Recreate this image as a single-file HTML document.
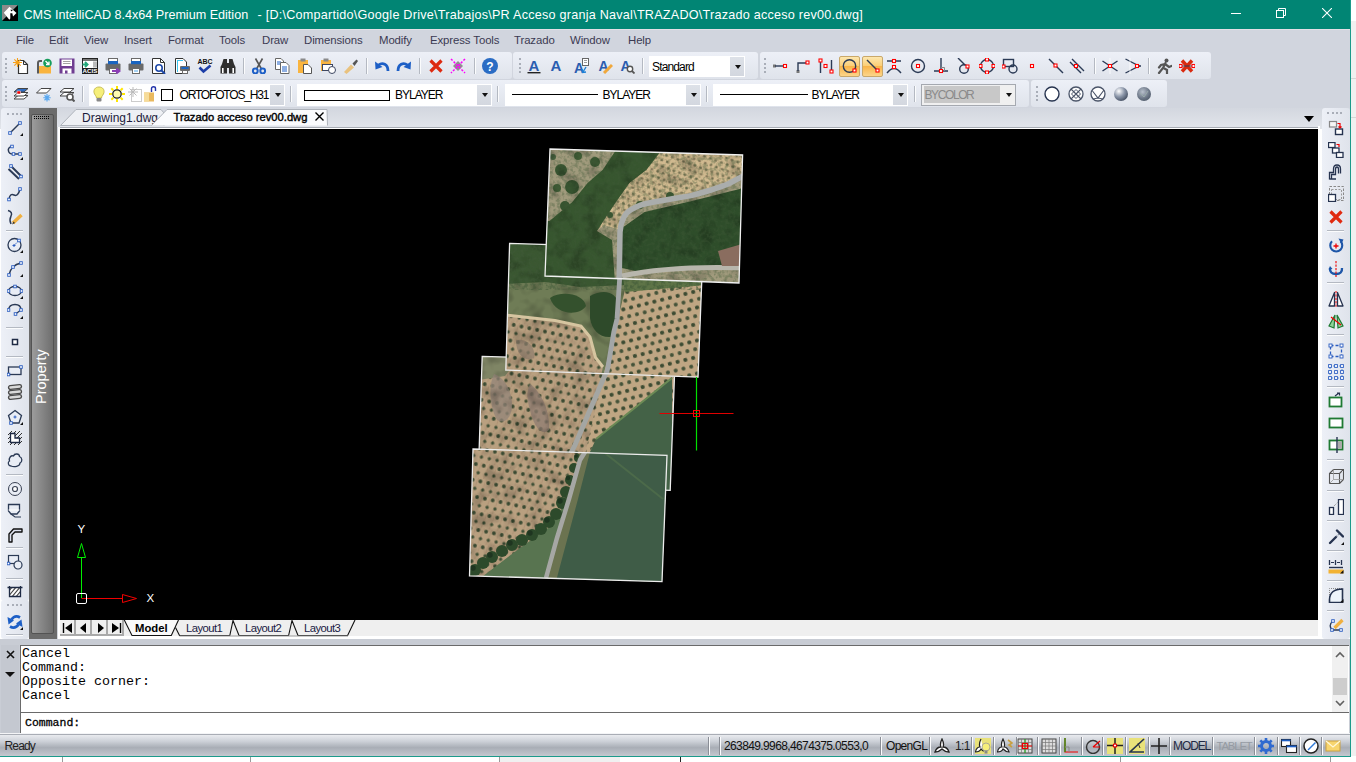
<!DOCTYPE html><html><head><meta charset="utf-8"><style>
*{margin:0;padding:0;box-sizing:border-box}
html,body{width:1356px;height:762px;overflow:hidden;background:#fff;font-family:"Liberation Sans",sans-serif;position:relative}
.a{position:absolute}
.t{white-space:nowrap;line-height:1}
.seg{position:absolute;background:linear-gradient(#edf0f7,#dfe3eb);border-radius:3px}
.grip{position:absolute;width:2px;border-left:2px dotted #a9aeb8}
.sep{position:absolute;width:2px;border-left:1px solid #b4b9c2;border-right:1px solid #fbfcfd}
.hsep{position:absolute;height:2px;border-top:1px solid #b4b9c2;border-bottom:1px solid #fbfcfd}
.dd{position:absolute;background:#fff}
.ddb{position:absolute;background:linear-gradient(#dde1e8,#d3d7df);}
.ddb:after{content:"";position:absolute;left:5px;top:7.5px;border-left:3.5px solid transparent;border-right:3.5px solid transparent;border-top:4px solid #111}
</style></head><body>
<div class="a" style="left:1351px;top:0px;width:5px;height:762px;background:#f0f0f0"></div>
<div class="a" style="left:1351px;top:0px;width:5px;height:21px;background:#fff"></div>
<div class="a" style="left:1351px;top:78px;width:5px;height:1px;background:#d6d6d6"></div>
<div class="a" style="left:1351px;top:117px;width:5px;height:1px;background:#d6d6d6"></div>
<div class="a" style="left:0px;top:756px;width:1356px;height:6px;background:#fff"></div>
<div class="a" style="left:62px;top:757px;width:1px;height:5px;background:#9a9a9a"></div>
<div class="a" style="left:250px;top:757px;width:1px;height:5px;background:#9a9a9a"></div>
<div class="a" style="left:499px;top:757px;width:1px;height:5px;background:#9a9a9a"></div>
<div class="a" style="left:548px;top:757px;width:1px;height:5px;background:#9a9a9a"></div>
<div class="a" style="left:1120px;top:757px;width:1px;height:5px;background:#9a9a9a"></div>
<div class="a" style="left:1330px;top:757px;width:1px;height:5px;background:#9a9a9a"></div>
<div class="a" style="left:500px;top:757px;width:120px;height:5px;background:#f0f0f0"></div>
<div class="a" style="left:680px;top:757px;width:1px;height:5px;background:#222"></div>
<div class="a" style="left:0px;top:0px;width:1351px;height:29px;background:#018574"></div>
<svg class="a" style="left:2.0px;top:5.0px;" width="16" height="16" viewBox="0 0 16 16"><path d="M0 0 H16 L0 16 Z" fill="#8a8a8a"/><path d="M16 0 V16 H0 Z" fill="#000"/><path d="M1.8 7.8 L7.5 1.8 L14.5 8 L11 11.5 L10.3 8.3 L8.3 8.3 L8.3 13.5 L7.3 14.8 Z" fill="#fff"/><path d="M8.3 4.8 H11 L9.65 6.4 Z" fill="#000"/></svg>
<div class="a t" style="left:23.5px;top:8.5px;font-size:12.6px;color:#fff">CMS IntelliCAD 8.4x64 Premium Edition</div>
<div class="a t" style="left:257.5px;top:8.5px;font-size:12.6px;color:#fff;letter-spacing:0.245px">- [D:\Compartido\Google Drive\Trabajos\PR Acceso granja Naval\TRAZADO\Trazado acceso rev00.dwg]</div>
<div class="a" style="left:1231px;top:13px;width:10px;height:1px;background:#fff"></div>
<svg class="a" style="left:1276.0px;top:8.0px;" width="10" height="10" viewBox="0 0 10 10"><rect x="0.5" y="2.5" width="7" height="7" fill="none" stroke="#fff"/><path d="M2.5 2.5 V0.5 H9.5 V7.5 H7.5" fill="none" stroke="#fff"/></svg>
<svg class="a" style="left:1322.0px;top:8.0px;" width="10" height="10" viewBox="0 0 10 10"><path d="M0 0 L10 10 M10 0 L0 10" stroke="#fff" stroke-width="1.1"/></svg>
<div class="a" style="left:0px;top:29px;width:1351px;height:79px;background:#d1d5de"></div>
<div class="a" style="left:0px;top:29px;width:1351px;height:1px;background:#e3dfe6"></div>
<div class="a t" style="left:16px;top:35px;font-size:11.4px;color:#3b3a52;letter-spacing:-0.1px">File</div>
<div class="a t" style="left:49px;top:35px;font-size:11.4px;color:#3b3a52;letter-spacing:-0.1px">Edit</div>
<div class="a t" style="left:84px;top:35px;font-size:11.4px;color:#3b3a52;letter-spacing:-0.1px">View</div>
<div class="a t" style="left:124px;top:35px;font-size:11.4px;color:#3b3a52;letter-spacing:-0.1px">Insert</div>
<div class="a t" style="left:168px;top:35px;font-size:11.4px;color:#3b3a52;letter-spacing:-0.1px">Format</div>
<div class="a t" style="left:219px;top:35px;font-size:11.4px;color:#3b3a52;letter-spacing:-0.1px">Tools</div>
<div class="a t" style="left:262px;top:35px;font-size:11.4px;color:#3b3a52;letter-spacing:-0.1px">Draw</div>
<div class="a t" style="left:304px;top:35px;font-size:11.4px;color:#3b3a52;letter-spacing:-0.1px">Dimensions</div>
<div class="a t" style="left:379px;top:35px;font-size:11.4px;color:#3b3a52;letter-spacing:-0.1px">Modify</div>
<div class="a t" style="left:430px;top:35px;font-size:11.4px;color:#3b3a52;letter-spacing:-0.1px">Express Tools</div>
<div class="a t" style="left:514px;top:35px;font-size:11.4px;color:#3b3a52;letter-spacing:-0.1px">Trazado</div>
<div class="a t" style="left:570px;top:35px;font-size:11.4px;color:#3b3a52;letter-spacing:-0.1px">Window</div>
<div class="a t" style="left:628px;top:35px;font-size:11.4px;color:#3b3a52;letter-spacing:-0.1px">Help</div>
<div class="seg" style="left:2px;top:52px;width:510px;height:27px"></div>
<div class="seg" style="left:513px;top:52px;width:245px;height:27px"></div>
<div class="seg" style="left:760px;top:52px;width:451px;height:27px"></div>
<div class="seg" style="left:2px;top:80px;width:1027px;height:27px"></div>
<div class="seg" style="left:1031px;top:80px;width:136px;height:27px"></div>
<div class="grip" style="left:5px;top:58px;height:15px"></div>
<div class="grip" style="left:519px;top:58px;height:15px"></div>
<div class="grip" style="left:764px;top:58px;height:15px"></div>
<div class="grip" style="left:5px;top:86px;height:15px"></div>
<div class="grip" style="left:1036px;top:86px;height:15px"></div>
<div class="sep" style="left:243px;top:58px;height:16px"></div>
<div class="sep" style="left:366px;top:58px;height:16px"></div>
<div class="sep" style="left:419px;top:58px;height:16px"></div>
<div class="sep" style="left:474px;top:58px;height:16px"></div>
<div class="sep" style="left:642px;top:58px;height:16px"></div>
<div class="sep" style="left:1094px;top:58px;height:16px"></div>
<div class="sep" style="left:1148px;top:58px;height:16px"></div>
<div class="sep" style="left:82px;top:86px;height:16px"></div>
<div class="sep" style="left:290px;top:86px;height:16px"></div>
<div class="sep" style="left:497px;top:86px;height:16px"></div>
<div class="sep" style="left:706px;top:86px;height:16px"></div>
<div class="sep" style="left:914px;top:86px;height:16px"></div>
<div class="dd" style="left:649px;top:56px;width:96px;height:21px"></div>
<div class="ddb" style="left:730px;top:57px;width:14px;height:19px"></div>
<div class="a t" style="left:652px;top:60.5px;font-size:12px;color:#000;letter-spacing:-0.85px">Standard</div>
<div class="dd" style="left:89px;top:84px;width:196px;height:22px"></div>
<div class="ddb" style="left:270px;top:85px;width:14px;height:20px"></div>
<div class="dd" style="left:297px;top:84px;width:195px;height:22px"></div>
<div class="ddb" style="left:477px;top:85px;width:14px;height:20px"></div>
<div class="dd" style="left:505px;top:84px;width:196px;height:22px"></div>
<div class="ddb" style="left:686px;top:85px;width:14px;height:20px"></div>
<div class="dd" style="left:713px;top:84px;width:195px;height:22px"></div>
<div class="ddb" style="left:893px;top:85px;width:14px;height:20px"></div>
<div class="a t" style="left:179.5px;top:89px;font-size:12px;color:#000;letter-spacing:-1.18px">ORTOFOTOS_H31</div>
<div class="a" style="left:161px;top:88.5px;width:12px;height:12px;border:1px solid #000;background:#fff"></div>
<div class="a" style="left:304px;top:89.5px;width:86px;height:11px;border:1px solid #000;background:#fff"></div>
<div class="a t" style="left:395px;top:89px;font-size:12px;color:#000;letter-spacing:-1px">BYLAYER</div>
<div class="a" style="left:512px;top:94px;width:86px;height:1px;background:#000"></div>
<div class="a t" style="left:602.5px;top:89px;font-size:12px;color:#000;letter-spacing:-1px">BYLAYER</div>
<div class="a" style="left:720px;top:94px;width:88px;height:1px;background:#000"></div>
<div class="a t" style="left:811.5px;top:89px;font-size:12px;color:#000;letter-spacing:-1px">BYLAYER</div>
<div class="a" style="left:921px;top:84px;width:95px;height:22px;border:1px solid #a5a9b0;background:#f0f0f0"></div>
<div class="a" style="left:923.5px;top:86px;width:76.5px;height:17px;background:#c8c8c8"></div>
<div class="a t" style="left:924.5px;top:89px;font-size:12px;color:#8a8a8a;letter-spacing:-1.4px">BYCOLOR</div>
<div class="ddb" style="left:1001px;top:85px;width:14px;height:20px;background:#f0f0f0"></div>
<svg class="a" style="left:13.0px;top:58.0px;" width="16" height="16" viewBox="0 0 16 16"><path d="M5.5 2.5 H10.5 L14.5 6.5 V15.5 H5.5 Z" fill="#fff" stroke="#333" stroke-width="1.2"/><path d="M10.5 2.5 V6.5 H14.5" fill="none" stroke="#333"/><g stroke="#f7a21b" stroke-width="1.1"><path d="M4.5 0 V9 M0 4.5 H9 M1.3 1.3 L7.7 7.7 M7.7 1.3 L1.3 7.7"/></g><circle cx="4.5" cy="4.5" r="2" fill="#f7a21b"/></svg>
<svg class="a" style="left:36.0px;top:58.0px;" width="16" height="16" viewBox="0 0 16 16"><path d="M2 15.5 V5 Q2 3 4 3 H6" stroke="#5a5a5a" stroke-width="2" fill="none"/><path d="M3 8 H15 V15.5 H3 Z" fill="#f9b43f"/><circle cx="11.5" cy="5" r="4.3" fill="#169d5c"/><path d="M9.5 3 L12.8 6.3 M13 3.5 V6.5 H10" stroke="#fff" stroke-width="1.3" fill="none"/></svg>
<svg class="a" style="left:59.0px;top:58.0px;" width="16" height="16" viewBox="0 0 16 16"><rect x="0.5" y="0.5" width="15" height="15" fill="#6f3d91"/><rect x="2.5" y="1.5" width="10.5" height="6.5" fill="#fff"/><path d="M4 3.5 H11.5 M4 5.5 H11.5" stroke="#999" stroke-width="0.9"/><rect x="3.5" y="10.5" width="9" height="5" fill="#fff"/><rect x="6" y="12.5" width="2.5" height="3" fill="#6f3d91"/></svg>
<svg class="a" style="left:82.0px;top:58.0px;" width="16" height="16" viewBox="0 0 16 16"><rect x="0.5" y="0.5" width="15" height="15" fill="#fff" stroke="#222"/><rect x="1" y="1" width="14" height="2" fill="#777"/><rect x="11" y="3.5" width="4" height="6" fill="#bbb"/><rect x="1" y="10" width="14" height="6" fill="#1e1e1e"/><text x="8" y="15.3" font-size="6.2" font-weight="bold" fill="#fff" text-anchor="middle" font-family="Liberation Sans">ACIS</text><path d="M0.5 6.5 H5 M3 4 L5.5 6.5 L3 9" stroke="#22a77a" stroke-width="2" fill="none"/></svg>
<svg class="a" style="left:105.0px;top:58.0px;" width="16" height="16" viewBox="0 0 16 16"><rect x="0.5" y="5.5" width="15" height="7" rx="1" fill="#6a6a6a"/><rect x="3.5" y="0.5" width="9" height="4" fill="#fff" stroke="#6a6a6a"/><rect x="3" y="3" width="10" height="3.2" fill="#1a64c0"/><rect x="4.5" y="10.5" width="7" height="5" fill="#fff" stroke="#6a6a6a"/><path d="M7 13 H14 M11.3 10.5 L14.5 13 L11.3 15.5" stroke="#8b3fb5" stroke-width="2" fill="none"/></svg>
<svg class="a" style="left:128.0px;top:58.0px;" width="16" height="16" viewBox="0 0 16 16"><rect x="0.5" y="5.5" width="15" height="7" rx="1" fill="#6a6a6a"/><rect x="3.5" y="0.5" width="9" height="4" fill="#fff" stroke="#6a6a6a"/><rect x="3" y="3" width="10" height="3.2" fill="#1a64c0"/><rect x="4.5" y="10.5" width="7" height="5" fill="#fff" stroke="#6a6a6a"/><path d="M6 13 H10" stroke="#4aa3e8"/></svg>
<svg class="a" style="left:151.0px;top:58.0px;" width="16" height="16" viewBox="0 0 16 16"><path d="M1.5 0.5 H9.5 L13.5 4.5 V15.5 H1.5 Z" fill="#fff" stroke="#333"/><path d="M9.5 0.5 V4.5 H13.5" fill="none" stroke="#333"/><circle cx="8" cy="10" r="3.2" fill="none" stroke="#1d48a8" stroke-width="1.6"/><path d="M10.3 12.3 L14 16" stroke="#1d48a8" stroke-width="2"/></svg>
<svg class="a" style="left:174.0px;top:58.0px;" width="16" height="16" viewBox="0 0 16 16"><path d="M1.5 0.5 H9 L12.5 4 V15.5 H1.5 Z" fill="#fff" stroke="#333"/><path d="M3.5 2 V14 M3.5 2.5 H9" stroke="#3cc6f0"/><rect x="6" y="8" width="10" height="5" rx="1" fill="#6a6a6a"/><rect x="7.5" y="9" width="7" height="2" fill="#1a64c0"/><rect x="8.5" y="12.5" width="5" height="3" fill="#fff" stroke="#6a6a6a"/></svg>
<svg class="a" style="left:197.0px;top:58.0px;" width="16" height="16" viewBox="0 0 16 16"><text x="8" y="6.3" font-size="7" font-weight="bold" fill="#111" text-anchor="middle" font-family="Liberation Sans">ABC</text><path d="M2.5 9.5 L6.5 13.5 L13.5 7.5" stroke="#1c3ea8" stroke-width="2.6" fill="none"/></svg>
<svg class="a" style="left:220.0px;top:58.0px;" width="16" height="16" viewBox="0 0 16 16"><path d="M2 6 L3.5 1 H7 V15.5 H0.5 V9 Z" fill="#2f2f2f"/><path d="M14 6 L12.5 1 H9 V15.5 H15.5 V9 Z" fill="#2f2f2f"/><rect x="6" y="5" width="4" height="5" fill="#2f2f2f"/><rect x="2" y="10" width="1.6" height="5" fill="#fff"/><rect x="12.4" y="10" width="1.6" height="5" fill="#fff"/></svg>
<svg class="a" style="left:251.0px;top:58.0px;" width="16" height="16" viewBox="0 0 16 16"><path d="M4.5 0.5 L10.5 11 M11.5 0.5 L5.5 11" stroke="#555" stroke-width="1.6"/><circle cx="4.3" cy="13" r="2.4" fill="none" stroke="#1d5fc6" stroke-width="2"/><circle cx="11.7" cy="13" r="2.4" fill="none" stroke="#1d5fc6" stroke-width="2"/></svg>
<svg class="a" style="left:274.0px;top:58.0px;" width="16" height="16" viewBox="0 0 16 16"><path d="M1.5 0.5 H7 L9.5 3 V11.5 H1.5 Z" fill="#fff" stroke="#666"/><path d="M3 4 H7 M3 6 H7" stroke="#1d5fc6"/><path d="M6.5 4.5 H12 L15 7.5 V15.5 H6.5 Z" fill="#fff" stroke="#666"/><path d="M8 9 H13 M8 11 H13 M8 13 H13" stroke="#1d5fc6"/></svg>
<svg class="a" style="left:297.0px;top:58.0px;" width="16" height="16" viewBox="0 0 16 16"><rect x="1" y="2" width="10" height="13" fill="#f9b43f"/><rect x="3.5" y="0.5" width="5" height="3" fill="#8a8a8a"/><path d="M6.5 6.5 H11 L14.5 10 V15.5 H6.5 Z" fill="#fff" stroke="#555"/></svg>
<svg class="a" style="left:320.0px;top:58.0px;" width="16" height="16" viewBox="0 0 16 16"><rect x="1" y="2" width="10" height="11" fill="#f9b43f"/><rect x="3.5" y="0.5" width="5" height="3" fill="#8a8a8a"/><rect x="2.5" y="6.5" width="10" height="6" fill="#fff" stroke="#3d4660"/><circle cx="12" cy="12" r="3.5" fill="#fff" stroke="#3d4660"/></svg>
<svg class="a" style="left:343.0px;top:58.0px;" width="16" height="16" viewBox="0 0 16 16"><path d="M1 14 L8 6.5 L11 9.5 L3.5 16 Z" fill="#e9c27e"/><path d="M9.5 5.5 L13.5 1.5 L15 3 L11.5 8 Z" fill="#555"/></svg>
<svg class="a" style="left:374.0px;top:58.0px;" width="16" height="16" viewBox="0 0 16 16"><path d="M14 13 C14 6 8.5 4 4.5 7" stroke="#1d5fc6" stroke-width="2.8" fill="none"/><path d="M1 3.5 L1.5 11.5 L8.5 9 Z" fill="#1d5fc6"/></svg>
<svg class="a" style="left:396.0px;top:58.0px;" width="16" height="16" viewBox="0 0 16 16"><path d="M2 13 C2 6 7.5 4 11.5 7" stroke="#1d5fc6" stroke-width="2.8" fill="none"/><path d="M15 3.5 L14.5 11.5 L7.5 9 Z" fill="#1d5fc6"/></svg>
<svg class="a" style="left:428.0px;top:58.0px;" width="16" height="16" viewBox="0 0 16 16"><path d="M2.5 2.5 L13.5 13.5 M13.5 2.5 L2.5 13.5" stroke="#dd2a10" stroke-width="3.2"/></svg>
<svg class="a" style="left:450.0px;top:58.0px;" width="16" height="16" viewBox="0 0 16 16"><path d="M8 3 L13 8 L8 13 L3 8 Z" fill="#8f8f8f"/><path d="M1 1 L15 15 M15 1 L1 15" stroke="#f0f" stroke-width="1.5" stroke-dasharray="2.2 1.5"/></svg>
<svg class="a" style="left:482.0px;top:58.0px;" width="16" height="16" viewBox="0 0 16 16"><circle cx="8" cy="8" r="8" fill="#2a6cc4"/><text x="8" y="13" font-size="12" font-weight="bold" fill="#fff" text-anchor="middle" font-family="Liberation Sans">?</text></svg>
<svg class="a" style="left:527.0px;top:58.0px;" width="16" height="16" viewBox="0 0 16 16"><text x="7" y="13" font-size="15" font-weight="bold" fill="#2a5db0" text-anchor="middle" font-family="Liberation Sans">A</text><rect x="0.5" y="14" width="13" height="1.4" fill="#222"/></svg>
<svg class="a" style="left:549.0px;top:58.0px;" width="16" height="16" viewBox="0 0 16 16"><text x="7" y="13" font-size="15" font-weight="bold" fill="#2a5db0" text-anchor="middle" font-family="Liberation Sans">A</text></svg>
<svg class="a" style="left:573.0px;top:58.0px;" width="16" height="16" viewBox="0 0 16 16"><text x="6" y="15" font-size="14" font-weight="bold" fill="#2a5db0" text-anchor="middle" font-family="Liberation Sans">A</text><rect x="9.5" y="0.5" width="6" height="7" fill="#fff" stroke="#666"/><path d="M11 2.5 H14 M11 4.5 H14" stroke="#888" stroke-width="0.8"/><path d="M13 9 L10 14 M9 11 L9.5 14.5 L13 14" stroke="#1d7fd6" stroke-width="1.4" fill="none"/></svg>
<svg class="a" style="left:597.0px;top:58.0px;" width="16" height="16" viewBox="0 0 16 16"><text x="6.5" y="13" font-size="14" font-weight="bold" fill="#2a5db0" text-anchor="middle" font-family="Liberation Sans">A</text><path d="M7 15 L15 7" stroke="#f0a83c" stroke-width="3"/></svg>
<svg class="a" style="left:619.0px;top:58.0px;" width="16" height="16" viewBox="0 0 16 16"><text x="6.5" y="13" font-size="14" font-weight="bold" fill="#2a5db0" text-anchor="middle" font-family="Liberation Sans">A</text><circle cx="11" cy="11" r="2.7" fill="#fff" stroke="#555" stroke-width="1.4"/><path d="M13 13 L15.5 15.5" stroke="#555" stroke-width="1.8"/></svg>
<div class="a" style="left:839px;top:55.5px;width:21px;height:21px;border:1px solid #c9a86a;border-radius:2px;background:linear-gradient(#fde7ae,#fbcf78 45%,#f9b54a 50%,#fcd58a 100%)"></div>
<div class="a" style="left:862px;top:55.5px;width:21px;height:21px;border:1px solid #c9a86a;border-radius:2px;background:linear-gradient(#fde7ae,#fbcf78 45%,#f9b54a 50%,#fcd58a 100%)"></div>
<svg class="a" style="left:772.0px;top:58.0px;" width="16" height="16" viewBox="0 0 16 16"><rect x="1" y="6.5" width="3" height="3" fill="#777"/><path d="M3 8 H12" stroke="#2b3a55" stroke-width="1.4" fill="none"/><rect x="11.5" y="6.5" width="3" height="3" fill="#fff" stroke="#ff0000" stroke-width="1.1"/></svg>
<svg class="a" style="left:795.0px;top:58.0px;" width="16" height="16" viewBox="0 0 16 16"><rect x="1.5" y="12" width="3" height="3" fill="#777"/><path d="M3 13 V5 H11" stroke="#2b3a55" stroke-width="1.4" fill="none"/><rect x="11.0" y="3.0" width="3" height="3" fill="#fff" stroke="#ff0000" stroke-width="1.1"/></svg>
<svg class="a" style="left:818.0px;top:58.0px;" width="16" height="16" viewBox="0 0 16 16"><path d="M2.5 1 V15 M13.5 2 V15" stroke="#2b3a55" stroke-width="1.4" fill="none"/><rect x="1.0" y="1.0" width="3" height="3" fill="#fff" stroke="#ff0000" stroke-width="1.1"/><rect x="12.0" y="12.0" width="3" height="3" fill="#fff" stroke="#ff0000" stroke-width="1.1"/><rect x="6.0" y="6.5" width="3" height="3" fill="#fff" stroke="#ff0000" stroke-width="1.1"/></svg>
<svg class="a" style="left:841.5px;top:58.0px;" width="16" height="16" viewBox="0 0 16 16"><circle cx="7.5" cy="8" r="6.2" stroke="#2b3a55" stroke-width="1.4" fill="none"/><rect x="11.0" y="11.0" width="3" height="3" fill="#fff" stroke="#ff0000" stroke-width="1.1"/></svg>
<svg class="a" style="left:864.5px;top:58.0px;" width="16" height="16" viewBox="0 0 16 16"><path d="M2 2 L13 13" stroke="#2b3a55" stroke-width="1.4" fill="none"/><rect x="11.0" y="11.0" width="3" height="3" fill="#fff" stroke="#ff0000" stroke-width="1.1"/></svg>
<svg class="a" style="left:886.0px;top:58.0px;" width="16" height="16" viewBox="0 0 16 16"><path d="M1 3 H15 M1 15 Q8 6 15 15" stroke="#2b3a55" stroke-width="1.4" fill="none"/><rect x="6.5" y="1.5" width="3" height="3" fill="#fff" stroke="#ff0000" stroke-width="1.1"/><rect x="6.5" y="7.5" width="3" height="3" fill="#fff" stroke="#ff0000" stroke-width="1.1"/></svg>
<svg class="a" style="left:910.0px;top:58.0px;" width="16" height="16" viewBox="0 0 16 16"><circle cx="8" cy="8" r="6.5" stroke="#2b3a55" stroke-width="1.4" fill="none"/><rect x="6.5" y="6.5" width="3" height="3" fill="#fff" stroke="#ff0000" stroke-width="1.1"/></svg>
<svg class="a" style="left:933.0px;top:58.0px;" width="16" height="16" viewBox="0 0 16 16"><path d="M8 0 V13 M1 13 H15" stroke="#2b3a55" stroke-width="1.4" fill="none"/><path d="M8 9.5 H11.5 V13" stroke="#888" fill="none"/><rect x="6.5" y="11.5" width="3" height="3" fill="#fff" stroke="#ff0000" stroke-width="1.1"/></svg>
<svg class="a" style="left:956.0px;top:58.0px;" width="16" height="16" viewBox="0 0 16 16"><path d="M2 0 L9 7" stroke="#2b3a55" stroke-width="1.4" fill="none"/><circle cx="8" cy="11" r="4.3" stroke="#2b3a55" stroke-width="1.4" fill="none"/><rect x="10.0" y="7.0" width="3" height="3" fill="#fff" stroke="#ff0000" stroke-width="1.1"/></svg>
<svg class="a" style="left:979.0px;top:58.0px;" width="16" height="16" viewBox="0 0 16 16"><circle cx="8" cy="8" r="6.5" stroke="#2b3a55" stroke-width="1.4" fill="none"/><rect x="6.5" y="0.0" width="3" height="3" fill="#fff" stroke="#ff0000" stroke-width="1.1"/><rect x="0.0" y="6.5" width="3" height="3" fill="#fff" stroke="#ff0000" stroke-width="1.1"/><rect x="13.0" y="6.5" width="3" height="3" fill="#fff" stroke="#ff0000" stroke-width="1.1"/><rect x="6.5" y="13.0" width="3" height="3" fill="#fff" stroke="#ff0000" stroke-width="1.1"/></svg>
<svg class="a" style="left:1002.0px;top:58.0px;" width="16" height="16" viewBox="0 0 16 16"><rect x="1.5" y="1.5" width="10" height="7" stroke="#2b3a55" stroke-width="1.4" fill="none"/><circle cx="11" cy="11" r="4" stroke="#2b3a55" stroke-width="1.4" fill="none"/><rect x="0.0" y="7.0" width="3" height="3" fill="#fff" stroke="#ff0000" stroke-width="1.1"/></svg>
<svg class="a" style="left:1024.0px;top:58.0px;" width="16" height="16" viewBox="0 0 16 16"><rect x="6.5" y="6.5" width="3" height="3" fill="#fff" stroke="#ff0000" stroke-width="1.1"/></svg>
<svg class="a" style="left:1048.0px;top:58.0px;" width="16" height="16" viewBox="0 0 16 16"><path d="M1 1 L15 15" stroke="#2b3a55" stroke-width="1.4" fill="none"/><rect x="6.0" y="6.0" width="3" height="3" fill="#fff" stroke="#ff0000" stroke-width="1.1"/></svg>
<svg class="a" style="left:1069.0px;top:58.0px;" width="16" height="16" viewBox="0 0 16 16"><path d="M3 1 L15 13 M1 4 L12 15" stroke="#2b3a55" stroke-width="1.4" fill="none"/><rect x="5.5" y="6.5" width="3" height="3" fill="#fff" stroke="#ff0000" stroke-width="1.1"/></svg>
<svg class="a" style="left:1102.0px;top:58.0px;" width="16" height="16" viewBox="0 0 16 16"><path d="M0.5 3 L15.5 13 M15.5 3 L0.5 13" stroke="#2b3a55" stroke-width="1.4" fill="none"/><path d="M8 0 V16" stroke="#fff" stroke-width="0.8"/><rect x="6.5" y="6.5" width="3" height="3" fill="#fff" stroke="#ff0000" stroke-width="1.1"/></svg>
<svg class="a" style="left:1124.5px;top:58.0px;" width="16" height="16" viewBox="0 0 16 16"><path d="M0.5 1 L14 8 L0.5 15" stroke="#2b3a55" stroke-width="1.4" fill="none"/><path d="M5 0 V16" stroke="#fff" stroke-width="0.8"/><path d="M14 8 H16" stroke="#2b3a55" stroke-width="1.4" fill="none"/><rect x="10.5" y="6.5" width="3" height="3" fill="#fff" stroke="#ff0000" stroke-width="1.1"/></svg>
<svg class="a" style="left:1156.0px;top:58.0px;" width="16" height="16" viewBox="0 0 16 16"><circle cx="10.5" cy="2.5" r="2" fill="#555"/><path d="M9.5 5 L7 10 L3 15 M7.5 10 L11 12 L11 16 M9 6 L13 9 L15.5 8 M9 6 L5 7 L3 9.5" stroke="#555" stroke-width="2.2" fill="none" stroke-linecap="round"/></svg>
<svg class="a" style="left:1179.0px;top:58.0px;" width="16" height="16" viewBox="0 0 16 16"><path d="M3 2.5 L13 13.5 M13 2.5 L3 13.5" stroke="#d92b10" stroke-width="3.4"/><path d="M1 8 H15" stroke="#2b3a55" stroke-width="1"/><rect x="0.0" y="6.5" width="3" height="3" fill="#fff" stroke="#ff0000" stroke-width="1.1"/><rect x="13.0" y="6.5" width="3" height="3" fill="#fff" stroke="#ff0000" stroke-width="1.1"/></svg>
<svg class="a" style="left:13.0px;top:86.0px;" width="16" height="16" viewBox="0 0 16 16"><path d="M1 13 L5 9.5 H15 L11 13 Z" fill="#fff" stroke="#444"/><path d="M1 10 L5 6.5 H15 L11 10 Z" fill="#fff" stroke="#444"/><path d="M1 6 L5 2.5 H15 L11 6 Z" fill="#2f6cc0" stroke="#444"/><rect x="4" y="5" width="3.5" height="3" fill="#e00" stroke="#fff" stroke-width="0.5"/></svg>
<svg class="a" style="left:36.0px;top:86.0px;" width="16" height="16" viewBox="0 0 16 16"><path d="M0.5 7 L5 2.5 H15 L10.5 7 Z" fill="#fff" stroke="#444"/><g stroke="#5aa8f0" stroke-width="1.2"><path d="M11 8 V15.5 M7.3 11.75 H14.7 M8.5 9.3 L13.5 14.2 M13.5 9.3 L8.5 14.2"/></g></svg>
<svg class="a" style="left:59.0px;top:86.0px;" width="16" height="16" viewBox="0 0 16 16"><path d="M1 10 L5 6.5 H15 L11 10 Z" fill="#fff" stroke="#444"/><path d="M1 6 L5 2.5 H15 L11 6 Z" fill="#fff" stroke="#444"/><circle cx="11" cy="11" r="3" fill="#fff" stroke="#555" stroke-width="1.6"/><path d="M13 13 L15.5 15.5" stroke="#555" stroke-width="2"/></svg>
<svg class="a" style="left:91.0px;top:86.0px;" width="16" height="16" viewBox="0 0 16 16"><path d="M8 1 C4 1 2.5 4 3 6.5 C3.5 9 5.5 10 5.5 12 H10.5 C10.5 10 12.5 9 13 6.5 C13.5 4 12 1 8 1 Z" fill="#f6ef7a" stroke="#b9ad40" stroke-width="0.8"/><rect x="5.5" y="12" width="5" height="3.5" rx="1" fill="#888"/></svg>
<svg class="a" style="left:108.5px;top:86.0px;" width="16" height="16" viewBox="0 0 16 16"><circle cx="8" cy="8" r="4.2" fill="#fffbb0" stroke="#222" stroke-width="1.3"/><g stroke="#ffe600" stroke-width="2"><path d="M8 0 V3 M8 13 V16 M0 8 H3 M13 8 H16 M2.3 2.3 L4.3 4.3 M11.7 11.7 L13.7 13.7 M13.7 2.3 L11.7 4.3 M4.3 11.7 L2.3 13.7"/></g></svg>
<svg class="a" style="left:125.5px;top:86.0px;" width="16" height="16" viewBox="0 0 16 16"><rect x="5.5" y="3.5" width="10" height="12" fill="none" stroke="#ccc"/><g stroke="#bbb" stroke-width="1"><path d="M7 1 V11 M2 6 H12 M3.5 2.5 L10.5 9.5 M10.5 2.5 L3.5 9.5"/></g></svg>
<svg class="a" style="left:142.6px;top:86.0px;" width="16" height="16" viewBox="0 0 16 16"><path d="M8.5 6 V2.5 Q8.5 0.8 10.5 0.8 Q12.5 0.8 12.5 2.5 V5" stroke="#2233aa" stroke-width="1.4" fill="none"/><rect x="1" y="6.5" width="10" height="9" fill="#e9b95f"/><rect x="1" y="6.5" width="5" height="9" fill="#f6dc9a"/></svg>
<svg class="a" style="left:1044.0px;top:86.0px;" width="16" height="16" viewBox="0 0 16 16"><circle cx="8" cy="8" r="7" fill="#fff" stroke="#26334f" stroke-width="1.4"/></svg>
<svg class="a" style="left:1067.5px;top:86.0px;" width="16" height="16" viewBox="0 0 16 16"><circle cx="8" cy="8" r="7" fill="#fff" stroke="#4a5468" stroke-width="1.3"/><path d="M3 3 L13 13 M13 3 L3 13" stroke="#4a5468" stroke-width="1.1"/><path d="M8 3.5 L12.5 8 L8 12.5 L3.5 8 Z" fill="none" stroke="#4a5468"/></svg>
<svg class="a" style="left:1090.0px;top:86.0px;" width="16" height="16" viewBox="0 0 16 16"><circle cx="8" cy="8" r="7" fill="#fff" stroke="#4a5468" stroke-width="1.3"/><path d="M2.5 5 L8 12 L14 4 M3 13 L8 12 L13 13" stroke="#4a5468" fill="none" stroke-width="1.1"/></svg>
<svg class="a" style="left:1113.0px;top:86.0px;" width="16" height="16" viewBox="0 0 16 16"><defs><radialGradient id="sph" cx="0.35" cy="0.3" r="0.8"><stop offset="0" stop-color="#fff"/><stop offset="0.5" stop-color="#8a95a8"/><stop offset="1" stop-color="#3a4558"/></radialGradient></defs><circle cx="8" cy="8" r="7" fill="url(#sph)"/></svg>
<svg class="a" style="left:1135.6px;top:86.0px;" width="16" height="16" viewBox="0 0 16 16"><defs><radialGradient id="sph2" cx="0.4" cy="0.35" r="0.8"><stop offset="0" stop-color="#b8c0cc"/><stop offset="0.6" stop-color="#6a7585"/><stop offset="1" stop-color="#454f5e"/></radialGradient></defs><circle cx="8" cy="8" r="7" fill="url(#sph2)"/><path d="M4 7 L8 11 L12 5" stroke="#9aa" fill="none"/></svg>
<div class="a" style="left:0px;top:108px;width:1351px;height:21px;background:linear-gradient(#d3d7df,#e2e5eb)"></div>
<svg class="a" style="left:57.5px;top:109.0px;left:59.5px;top:109px" width="105" height="17" viewBox="0 0 105 17"><path d="M0.5 16.5 L16 0.5 L101 0.5 L104 4 L104 17 Z" fill="#eef0f4" stroke="#aeb3bb"/></svg>
<div class="a t" style="left:82px;top:111.5px;font-size:12px;color:#1b1b3a">Drawing1.dwg</div>
<svg class="a" style="left:-89.0px;top:-8.5px;left:150.5px;top:109px" width="178" height="17" viewBox="0 0 178 17"><path d="M0.5 16.5 L16 0.5 L176 0.5 L176.5 16.5" fill="#fafbfd" stroke="#aeb3bb"/></svg>
<div class="a t" style="left:173.5px;top:111.5px;font-size:11.2px;color:#000;-webkit-text-stroke:0.4px #000">Trazado acceso rev00.dwg</div>
<svg class="a" style="left:314.5px;top:112.0px;" width="9" height="9" viewBox="0 0 9 9"><path d="M0.5 0.5 L8.5 8.5 M8.5 0.5 L0.5 8.5" stroke="#000" stroke-width="1.4"/></svg>
<div class="a" style="left:1304px;top:116px;border-left:5.5px solid transparent;border-right:5.5px solid transparent;border-top:6px solid #000"></div>
<div class="a" style="left:59px;top:127px;width:1261px;height:1px;background:#a6abb3"></div>
<div class="a" style="left:59px;top:128px;width:1261px;height:1px;background:#fff"></div>
<div class="a" style="left:1px;top:108px;width:28px;height:493px;background:linear-gradient(90deg,#edf0f7,#dfe3eb);border-radius:3px"></div>
<div class="a" style="left:1px;top:600px;width:28px;height:39px;background:linear-gradient(90deg,#edf0f7,#dfe3eb);border-radius:3px"></div>
<div class="a" style="left:7px;top:113px;width:15px;height:2px;border-top:2px dotted #a9aeb8"></div>
<div class="a" style="left:7px;top:604px;width:15px;height:2px;border-top:2px dotted #a9aeb8"></div>
<svg class="a" style="left:6.5px;top:119.6px;" width="16" height="16" viewBox="0 0 16 16"><path d="M3 13 L13 3" stroke="#2b3a55" stroke-width="1.5" fill="none"/><rect x="1.7" y="11.7" width="2.6" height="2.6" fill="#fff" stroke="#2a5cc0" stroke-width="0.9"/><rect x="11.7" y="1.7" width="2.6" height="2.6" fill="#fff" stroke="#2a5cc0" stroke-width="0.9"/><path d="M13 16 L16 13 L16 16 Z" fill="#111"/></svg>
<svg class="a" style="left:6.5px;top:143.5px;" width="16" height="16" viewBox="0 0 16 16"><path d="M5 2.5 Q0.5 3.5 1.5 7 Q2 10 6 10 H13" stroke="#2b3a55" stroke-width="1.5" fill="none"/><rect x="3.7" y="1.2" width="2.6" height="2.6" fill="#fff" stroke="#2a5cc0" stroke-width="0.9"/><rect x="5.2" y="8.7" width="2.6" height="2.6" fill="#fff" stroke="#2a5cc0" stroke-width="0.9"/><rect x="11.7" y="8.7" width="2.6" height="2.6" fill="#fff" stroke="#2a5cc0" stroke-width="0.9"/><path d="M13 16 L16 13 L16 16 Z" fill="#111"/></svg>
<svg class="a" style="left:6.5px;top:163.7px;" width="16" height="16" viewBox="0 0 16 16"><path d="M1.5 5 L12 15 M4 2 L14.5 12.5" stroke="#2b3a55" stroke-width="1.9" fill="none"/><rect x="2.7" y="0.7" width="2.6" height="2.6" fill="#fff" stroke="#2a5cc0" stroke-width="0.9"/><rect x="12.7" y="11.2" width="2.6" height="2.6" fill="#fff" stroke="#2a5cc0" stroke-width="0.9"/></svg>
<svg class="a" style="left:6.5px;top:185.75px;" width="16" height="16" viewBox="0 0 16 16"><path d="M2 13 Q3 7 7 9 Q11 11 13 3" stroke="#2b3a55" stroke-width="1.5" fill="none"/><rect x="0.7" y="12.2" width="2.6" height="2.6" fill="#fff" stroke="#2a5cc0" stroke-width="0.9"/><rect x="11.7" y="1.7" width="2.6" height="2.6" fill="#fff" stroke="#2a5cc0" stroke-width="0.9"/></svg>
<svg class="a" style="left:6.5px;top:209.0px;" width="16" height="16" viewBox="0 0 16 16"><path d="M1 1.5 Q6 3 4 7 Q2 11 4 15" stroke="#2b3a55" stroke-width="1.5" fill="none"/><path d="M6 14 L14.5 6" stroke="#f0b040" stroke-width="3.4"/><path d="M5 15.5 L6.5 12.5 L8 14 Z" fill="#333"/></svg>
<svg class="a" style="left:6.5px;top:237.0px;" width="16" height="16" viewBox="0 0 16 16"><circle cx="7.5" cy="8" r="6.5" fill="#e9edf5" stroke="#2b3a55" stroke-width="1.3"/><path d="M7 8.5 L12 3.5" stroke="#2a5cc0" stroke-dasharray="1.5 1"/><path d="M5.5 8.5 H8.5 M7 7 V10" stroke="#2a5cc0"/><rect x="10.7" y="2.2" width="2.6" height="2.6" fill="#fff" stroke="#2a5cc0" stroke-width="0.9"/><path d="M13 16 L16 13 L16 16 Z" fill="#111"/></svg>
<svg class="a" style="left:6.5px;top:261.0px;" width="16" height="16" viewBox="0 0 16 16"><path d="M2 14 Q4 4 14 2" stroke="#2b3a55" stroke-width="1.5" fill="none"/><rect x="0.7" y="12.7" width="2.6" height="2.6" fill="#fff" stroke="#2a5cc0" stroke-width="0.9"/><rect x="4.7" y="4.7" width="2.6" height="2.6" fill="#fff" stroke="#2a5cc0" stroke-width="0.9"/><rect x="12.7" y="0.7" width="2.6" height="2.6" fill="#fff" stroke="#2a5cc0" stroke-width="0.9"/><path d="M13 16 L16 13 L16 16 Z" fill="#111"/></svg>
<svg class="a" style="left:6.5px;top:283.0px;" width="16" height="16" viewBox="0 0 16 16"><ellipse cx="8" cy="8" rx="6.5" ry="4.5" fill="#e9edf5" stroke="#2b3a55" stroke-width="1.3"/><rect x="0.19999999999999996" y="6.7" width="2.6" height="2.6" fill="#fff" stroke="#2a5cc0" stroke-width="0.9"/><rect x="13.2" y="6.7" width="2.6" height="2.6" fill="#fff" stroke="#2a5cc0" stroke-width="0.9"/><rect x="6.7" y="2.2" width="2.6" height="2.6" fill="#fff" stroke="#2a5cc0" stroke-width="0.9"/><path d="M13 16 L16 13 L16 16 Z" fill="#111"/></svg>
<svg class="a" style="left:6.5px;top:303.4px;" width="16" height="16" viewBox="0 0 16 16"><path d="M1.5 7 Q2 1.5 8 1.5 Q14 1.5 14 7 L8.5 11" stroke="#2b3a55" stroke-width="1.3" fill="none"/><rect x="0.19999999999999996" y="5.7" width="2.6" height="2.6" fill="#fff" stroke="#2a5cc0" stroke-width="0.9"/><rect x="12.7" y="5.7" width="2.6" height="2.6" fill="#fff" stroke="#2a5cc0" stroke-width="0.9"/><rect x="7.2" y="9.7" width="2.6" height="2.6" fill="#fff" stroke="#2a5cc0" stroke-width="0.9"/><path d="M13 16 L16 13 L16 16 Z" fill="#111"/></svg>
<svg class="a" style="left:6.5px;top:334.0px;" width="16" height="16" viewBox="0 0 16 16"><rect x="5.5" y="5.5" width="5" height="5" fill="#fff" stroke="#1e2a44" stroke-width="1.5"/></svg>
<svg class="a" style="left:6.5px;top:363.0px;" width="16" height="16" viewBox="0 0 16 16"><rect x="1.5" y="4" width="12.5" height="7.5" fill="#e9edf5" stroke="#2b3a55" stroke-width="1.3"/><rect x="0.19999999999999996" y="10.2" width="2.6" height="2.6" fill="#fff" stroke="#2a5cc0" stroke-width="0.9"/><rect x="12.7" y="2.7" width="2.6" height="2.6" fill="#fff" stroke="#2a5cc0" stroke-width="0.9"/></svg>
<svg class="a" style="left:6.5px;top:384.4px;" width="16" height="16" viewBox="0 0 16 16"><rect x="1.5" y="1.2" width="13" height="3.6" rx="1.8" fill="#d9d9d9" stroke="#4a4a4a" stroke-width="1.3" transform="rotate(-6 8 3)"/><rect x="1.5" y="6.2" width="13" height="3.6" rx="1.8" fill="#d9d9d9" stroke="#4a4a4a" stroke-width="1.3" transform="rotate(-6 8 8)"/><rect x="1.5" y="11.2" width="13" height="3.6" rx="1.8" fill="#d9d9d9" stroke="#4a4a4a" stroke-width="1.3" transform="rotate(-6 8 13)"/></svg>
<svg class="a" style="left:6.5px;top:409.0px;" width="16" height="16" viewBox="0 0 16 16"><path d="M8 1.5 L14.5 6.5 L12 14 H4 L1.5 6.5 Z" fill="#e9edf5" stroke="#2b3a55" stroke-width="1.3"/><path d="M6.5 8 H9.5 M8 6.5 V9.5" stroke="#2a5cc0"/><rect x="2.7" y="12.7" width="2.6" height="2.6" fill="#fff" stroke="#2a5cc0" stroke-width="0.9"/><path d="M13 16 L16 13 L16 16 Z" fill="#111"/></svg>
<svg class="a" style="left:6.5px;top:430.0px;" width="16" height="16" viewBox="0 0 16 16"><defs><clipPath id="hc"><rect x="1" y="1" width="14" height="14"/></clipPath></defs><g clip-path="url(#hc)"><path d="M-2 4 L4 -2 M-2 8 L8 -2 M-2 12 L12 -2 M-2 16 L16 -2 M2 16 L16 2 M6 16 L16 6 M10 16 L16 10 M14 16 L16 14" stroke="#333" stroke-width="1"/></g><path d="M3.5 3.5 H8 V8 H12.5 V12.5 H3.5 Z" fill="#fff" stroke="#1e2a44" stroke-width="1.3"/></svg>
<svg class="a" style="left:6.5px;top:452.0px;" width="16" height="16" viewBox="0 0 16 16"><path d="M4 14 C1 14 0.5 10 2.5 9 C1.5 6 4 3 6.5 4 C7.5 1 12.5 1.5 12.5 4.5 C15.5 5.5 15.5 10 13 11 C13 14.5 7 15.5 4 14 Z" fill="#e9edf5" stroke="#2b3a55" stroke-width="1.3"/></svg>
<svg class="a" style="left:6.5px;top:481.4px;" width="16" height="16" viewBox="0 0 16 16"><circle cx="8" cy="8" r="6.5" fill="#e9edf5" stroke="#3a4254" stroke-width="1"/><circle cx="8" cy="8" r="2.5" fill="#fff" stroke="#3a4254" stroke-width="1.2"/></svg>
<svg class="a" style="left:6.5px;top:502.7px;" width="16" height="16" viewBox="0 0 16 16"><path d="M1.5 1.5 H12.5 V8 L10 11 H4 L1.5 8 Z" fill="#e9edf5" stroke="#2b3a55" stroke-width="1.3"/><path d="M4 11 L8 14 H14" stroke="#2b3a55" stroke-width="1.1" fill="none"/><path d="M1.5 7 H12.5" stroke="#fff" stroke-width="1"/></svg>
<svg class="a" style="left:6.5px;top:526.6px;" width="16" height="16" viewBox="0 0 16 16"><path d="M2 15 V7 L6.5 2 H15 V5 H8 L5 8 V15 Z" fill="#dfe3f0" stroke="#111" stroke-width="1.4" stroke-linejoin="round"/></svg>
<svg class="a" style="left:6.5px;top:554.0px;" width="16" height="16" viewBox="0 0 16 16"><rect x="1.5" y="1.5" width="10" height="8" fill="#e9edf5" stroke="#2b3a55" stroke-width="1.2"/><circle cx="11" cy="11" r="4" fill="#e9edf5" stroke="#2b3a55" stroke-width="1.2"/><rect x="0.19999999999999996" y="8.2" width="2.6" height="2.6" fill="#fff" stroke="#2a5cc0" stroke-width="0.9"/></svg>
<svg class="a" style="left:6.5px;top:583.6px;" width="16" height="16" viewBox="0 0 16 16"><defs><clipPath id="hc2"><rect x="2.5" y="4" width="11" height="8"/></clipPath></defs><rect x="2.5" y="4" width="11" height="8" fill="#fff"/><g clip-path="url(#hc2)"><path d="M0 14 L10 2 M4 14 L14 2 M8 14 L18 2 M-4 14 L6 2" stroke="#444" stroke-width="1.1"/></g><path d="M0.5 3.5 H15.5 M2.5 2 V12.5 H13.5 V2" stroke="#1e2a44" stroke-width="1.3" fill="none"/></svg>
<svg class="a" style="left:6.5px;top:613.8px;" width="16" height="16" viewBox="0 0 16 16"><path d="M13 3.5 Q8 0.5 4.5 5.5" stroke="#1d5fc6" stroke-width="2.8" fill="none"/><path d="M0.5 3 L7 6.5 L1.5 10.5 Z" fill="#1d5fc6"/><path d="M3 12.5 Q8 15.5 11.5 10.5" stroke="#1d5fc6" stroke-width="2.8" fill="none"/><path d="M15.5 13 L9 9.5 L14.5 5.5 Z" fill="#1d5fc6"/><path d="M13 16 L16 13 L16 16 Z" fill="#111"/></svg>
<div class="hsep" style="left:6px;top:230px;width:17px"></div>
<div class="hsep" style="left:6px;top:327px;width:17px"></div>
<div class="hsep" style="left:6px;top:356px;width:17px"></div>
<div class="hsep" style="left:6px;top:474px;width:17px"></div>
<div class="hsep" style="left:6px;top:547px;width:17px"></div>
<div class="hsep" style="left:6px;top:578px;width:17px"></div>
<div class="hsep" style="left:6px;top:634px;width:17px"></div>
<div class="a" style="left:29px;top:108px;width:28px;height:531px;background:#6b6b6b"></div>
<div class="a" style="left:30.5px;top:114px;width:23.5px;height:520px;background:linear-gradient(90deg,#9c9c9c,#6e6e6e);border:1px solid #535353;border-radius:2px"></div>
<svg class="a" style="left:34px;top:116px" width="16" height="4" shape-rendering="crispEdges"><g fill="#000"><rect x="0" y="0" width="1" height="1"/><rect x="0" y="2" width="1" height="1"/><rect x="2" y="0" width="1" height="1"/><rect x="2" y="2" width="1" height="1"/><rect x="4" y="0" width="1" height="1"/><rect x="4" y="2" width="1" height="1"/><rect x="6" y="0" width="1" height="1"/><rect x="6" y="2" width="1" height="1"/><rect x="8" y="0" width="1" height="1"/><rect x="8" y="2" width="1" height="1"/><rect x="10" y="0" width="1" height="1"/><rect x="10" y="2" width="1" height="1"/><rect x="12" y="0" width="1" height="1"/><rect x="12" y="2" width="1" height="1"/><rect x="14" y="0" width="1" height="1"/><rect x="14" y="2" width="1" height="1"/></g></svg>
<div class="a" style="left:57px;top:127px;width:1px;height:512px;background:#d3d6dd"></div>
<div class="a" style="left:58px;top:127px;width:2px;height:512px;background:#fff"></div>
<div class="a t" style="left:0px;top:0px;font-size:14.5px;color:#fff;transform-origin:0 0;transform:rotate(-90deg);left:34px;top:404px">Property</div>
<div class="a" style="left:60px;top:129px;width:1258px;height:491px;background:#000"></div>
<div class="a" style="left:1318px;top:126px;width:2px;height:514px;background:#fff"></div>
<svg class="a" style="left:0;top:0" width="1356" height="762" viewBox="0 0 1356 762">
<defs>
<pattern id="olv" width="8" height="16" patternUnits="userSpaceOnUse" patternTransform="rotate(-14)"><rect width="8" height="16" fill="#bfa683"/><circle cx="2" cy="3" r="2.1" fill="#3c4b32"/><circle cx="6" cy="11" r="2" fill="#435238"/></pattern>
<pattern id="olv2" width="6" height="12" patternUnits="userSpaceOnUse" patternTransform="rotate(20)"><rect width="6" height="12" fill="#d0b98f"/><circle cx="1.5" cy="2" r="1.4" fill="#7b7656"/><circle cx="4.5" cy="8" r="1.3" fill="#86785a"/></pattern>
<pattern id="olv3" width="8" height="16" patternUnits="userSpaceOnUse" patternTransform="rotate(12)"><rect width="8" height="16" fill="#b9a080"/><path d="M7.5 0 L4.5 16" stroke="#a08065" stroke-width="0.9" opacity="0.5"/><circle cx="2" cy="3" r="1.9" fill="#3a4a32"/><circle cx="6" cy="11" r="1.7" fill="#3f5036"/></pattern>
<filter id="nz" x="0" y="0" width="100%" height="100%" filterUnits="userSpaceOnUse"><feTurbulence type="fractalNoise" baseFrequency="0.07" numOctaves="2" seed="7"/><feColorMatrix values="0 0 0 0 0  0 0 0 0 0  0 0 0 0 0  3.4 0 0 0 -1.55"/><feComposite in2="SourceGraphic" operator="in"/></filter>
<filter id="nzf" x="0" y="0" width="100%" height="100%" filterUnits="userSpaceOnUse"><feTurbulence type="fractalNoise" baseFrequency="0.28" numOctaves="2" seed="3"/><feColorMatrix values="0 0 0 0 0.05  0 0 0 0 0.1  0 0 0 0 0.04  4 0 0 0 -1.7"/><feComposite in2="SourceGraphic" operator="in"/></filter>
<filter id="nzl" x="0" y="0" width="100%" height="100%" filterUnits="userSpaceOnUse"><feTurbulence type="fractalNoise" baseFrequency="0.25" numOctaves="1" seed="11"/><feColorMatrix values="0 0 0 0 0.55  0 0 0 0 0.65  0 0 0 0 0.4  3 0 0 0 -1.5"/></filter>
<clipPath id="c1"><polygon points="550,149 742.6,155 739,283 545,276"/></clipPath>
<clipPath id="c2"><polygon points="509.6,243.4 703,249.3 698,377.2 505.8,370"/></clipPath>
<clipPath id="c3"><polygon points="482.2,356.4 675,362 670.2,490.3 478,484"/></clipPath>
<clipPath id="c4"><polygon points="473,449 667,455.4 662,581.7 469.5,575.8"/></clipPath>
</defs>
<g clip-path="url(#c3)">
<rect x="470" y="350" width="210" height="145" fill="url(#olv3)"/>
<polygon points="478,356 520,357 505,376 478,380" fill="#7f8565"/>
<path d="M494 374 C506 378 513 394 512 408 C510 420 504 424 497 420 C490 408 488 386 494 374 Z" fill="#938478" opacity="0.75"/>
<path d="M530 384 C541 392 550 410 549 430 C542 436 535 428 531 414 C527 400 526 392 530 384 Z" fill="#8f7c72" opacity="0.75"/>
<rect x="470" y="350" width="210" height="145" filter="url(#nz)" opacity="0.18"/>
<polygon points="606,362 676,362 672,378 640,405 600,440 585,455" fill="url(#olv)"/>
<polygon points="596,439 672,377 672,492 575,492 590,452" fill="#446247"/>
<path d="M596 439 L672 378" stroke="#6b8a55" stroke-width="2"/>
<path d="M619 362 L613 360 L605 375 L590 410 L575 445 L560 475" stroke="#a4a6a3" stroke-width="5" fill="none"/>
</g>
<polygon points="482.2,356.4 675,362 670.2,490.3 478,484" fill="none" stroke="#ececec" stroke-width="1.3"/>
<g clip-path="url(#c4)">
<rect x="465" y="445" width="205" height="140" fill="url(#olv3)"/>
<rect x="465" y="445" width="205" height="140" filter="url(#nz)" opacity="0.18"/>
<polygon points="470,586 520,548 548,528 562,508 569,495 557,538 548,586" fill="#587450"/>
<g fill="#2d4a2b"><circle cx="578" cy="458" r="4"/><circle cx="574" cy="468" r="5"/><circle cx="570" cy="480" r="5"/><circle cx="566" cy="492" r="6"/><circle cx="562" cy="503" r="6"/><circle cx="556" cy="514" r="6"/><circle cx="549" cy="522" r="6"/><circle cx="541" cy="529" r="6"/><circle cx="532" cy="535" r="6"/><circle cx="522" cy="540" r="6"/><circle cx="512" cy="545" r="6"/><circle cx="502" cy="551" r="6"/><circle cx="492" cy="557" r="6"/><circle cx="483" cy="563" r="6"/><circle cx="475" cy="570" r="6"/><circle cx="468" cy="577" r="6"/></g>
<g fill="#1f3520"><circle cx="576" cy="456" r="1.8"/><circle cx="568" cy="478" r="2.25"/><circle cx="560" cy="501" r="2.7"/><circle cx="547" cy="520" r="2.7"/><circle cx="530" cy="533" r="2.7"/><circle cx="510" cy="543" r="2.7"/><circle cx="490" cy="555" r="2.7"/><circle cx="473" cy="568" r="2.7"/></g>
<circle cx="566" cy="515" r="5" fill="#2f4b2c"/><circle cx="562" cy="533" r="4" fill="#2c4829"/><circle cx="570" cy="497" r="4" fill="#34502f"/>
<polygon points="580,452 670,455 665,585 546,585 569,499" fill="#6b7350"/><polygon points="590,452 670,455 665,585 555,585 578,499" fill="#3f5c47"/>
<path d="M596 446 L663 499" stroke="#4c6a4a" stroke-width="2"/>
<path d="M585 452 L580 460 L569 499 L557 538 L546 578" stroke="#a6a7a4" stroke-width="4.5" fill="none"/>
</g>
<polygon points="473,449 667,455.4 662,581.7 469.5,575.8" fill="none" stroke="#ececec" stroke-width="1.3"/>
<g clip-path="url(#c2)">
<rect x="500" y="240" width="210" height="140" fill="#6f7c56"/>
<polygon points="500,240 625,240 625,285 580,287 546,282 500,284" fill="#3a5731"/>
<polygon points="500,315 555,320 581,326 590,337 595.5,357.5 603,367 600,380 500,380" fill="url(#olv3)"/>
<path d="M516 340 C528 338 536 348 534 358 C526 362 516 356 516 340 Z" fill="#8d7c6c" opacity="0.7"/>
<rect x="500" y="240" width="210" height="140" filter="url(#nz)" opacity="0.2"/>
<rect x="500" y="240" width="125" height="50" filter="url(#nzf)" opacity="0.5"/>
<path d="M505 315 L555 320.5 L581 326 L590 337 L595.5 357.5 L603 367" stroke="#d6c5a0" stroke-width="3" fill="none"/>
<path d="M590 296 C604 288 618 292 618 306 L616 336 C602 340 592 332 590 318 Z" fill="#2e4a2a"/>
<path d="M550 298 C562 290 584 294 586 306 C580 316 556 316 550 298 Z" fill="#34512d"/>
<polygon points="625,290 705,283 700,380 602,380 614,335" fill="url(#olv)"/>
<polygon points="622,249 705,249 705,285 625,292 622,270" fill="#5e7447"/>
<rect x="620" y="240" width="90" height="50" filter="url(#nzf)" opacity="0.6"/>
<path d="M620 245 L619.5 281 L617 319 L613.8 332 L608 367 L605 380" stroke="#a3a6a7" stroke-width="4.8" fill="none"/>
</g>
<polygon points="509.6,243.4 703,249.3 698,377.2 505.8,370" fill="none" stroke="#ececec" stroke-width="1.3"/>
<g clip-path="url(#c1)">
<rect x="540" y="145" width="210" height="145" fill="#a09a7c"/>
<polygon points="661.7,150 745,153 745,175 730,183 692,195 654,202 631,210 620,230 604,225 597,231 604.7,219 616,202 629.4,183 646.5,169.7" fill="url(#olv2)"/>
<polygon points="616,150 661.7,150 646.5,169.7 629.4,183 616,202 604.7,219 597,231 612,240 615,283 545,283 545,221 549.5,221 572.3,202 587.6,183 602.8,169.7" fill="#37562f"/>
<circle cx="561" cy="170" r="6" fill="#3a5732"/><circle cx="578" cy="156" r="4" fill="#3f5c35"/><circle cx="595" cy="162" r="5" fill="#3a5732"/><circle cx="572" cy="187" r="7" fill="#36532f"/><circle cx="557" cy="188" r="4" fill="#3f5c35"/><circle cx="565" cy="206" r="5" fill="#36532f"/><circle cx="586" cy="200" r="6" fill="#36532f"/><circle cx="553" cy="157" r="3" fill="#4a6540"/>
<polygon points="622,228 644.6,212 692,201 739.7,189 745,186 745,268 700,268 640,272 622,268" fill="#2e4d2a"/>
<rect x="540" y="145" width="210" height="145" filter="url(#nz)" opacity="0.2"/>
<rect x="540" y="145" width="210" height="145" filter="url(#nzf)" opacity="0.35"/>
<circle cx="640" cy="205" r="4" fill="#3a5532"/><circle cx="670" cy="196" r="4" fill="#3a5532"/><circle cx="610" cy="215" r="3" fill="#3a5532"/>
<path d="M619 290 L619.5 260 L620 232 C621 220 625 213 631 209.7 C640 204 648 203 654 202 C670 199 680 197.5 692 195.4 C712 190 722 187 730 183 L745 175" stroke="#aaadac" stroke-width="5.5" fill="none"/>
<path d="M622 276 C650 270 690 266 745 268" stroke="#b8b6ac" stroke-width="5" fill="none"/>
<polygon points="718,251 742,244 742,266 722,266" fill="#8a6d5f"/>
</g>
<polygon points="550,149 742.6,155 739,283 545,276" fill="none" stroke="#f0f0f0" stroke-width="1.3"/>
<line x1="696.5" y1="377" x2="696.5" y2="450.5" stroke="#00e000" stroke-width="1.2"/>
<line x1="659.5" y1="413.5" x2="733.5" y2="413.5" stroke="#e00000" stroke-width="1.2"/>
<rect x="693.5" y="410.5" width="6" height="6" fill="none" stroke="#ff0000" stroke-width="1"/>
<line x1="81.5" y1="598" x2="81.5" y2="557" stroke="#00f000" stroke-width="1"/>
<path d="M77.5 557.5 L81.5 543.5 L85.5 557.5 Z" fill="none" stroke="#00f000" stroke-width="1"/>
<line x1="81.5" y1="598.5" x2="122.5" y2="598.5" stroke="#f00000" stroke-width="1"/>
<path d="M122.5 594.5 L136.5 598.5 L122.5 602.5 Z" fill="none" stroke="#f00000" stroke-width="1"/>
<rect x="76.5" y="593.5" width="10" height="10" rx="1.5" fill="none" stroke="#fff" stroke-width="1"/>
</svg>
<div class="a t" style="left:77.5px;top:523.5px;font-size:11.5px;color:#fff">Y</div>
<div class="a t" style="left:146.5px;top:592.5px;font-size:11.5px;color:#fff">X</div>
<div class="a" style="left:1322px;top:108px;width:28px;height:531px;background:linear-gradient(90deg,#edf0f7,#dfe3eb);border-radius:3px"></div>
<div class="a" style="left:1327px;top:112px;width:15px;height:2px;border-top:2px dotted #a9aeb8"></div>
<svg class="a" style="left:1327.5px;top:119.6px;" width="16" height="16" viewBox="0 0 16 16"><rect x="1.5" y="1.5" width="7" height="5.5" fill="#f6f6f6" stroke="#888" stroke-width="1.2"/><rect x="7.5" y="9" width="7" height="5.5" fill="#fff" stroke="#26334f" stroke-width="1.4"/><path d="M9.5 3.5 H12 V7.5 M10.5 6.5 L12 8 L13.5 6.5" stroke="#e00" stroke-width="1.2" fill="none"/></svg>
<svg class="a" style="left:1327.5px;top:141.6px;" width="16" height="16" viewBox="0 0 16 16"><rect x="0.5" y="0.5" width="6.5" height="5" fill="#fff" stroke="#26334f" stroke-width="1.3"/><rect x="4.5" y="6" width="6.5" height="5" fill="#fff" stroke="#26334f" stroke-width="1.3"/><rect x="8.5" y="10.5" width="6.5" height="5" fill="#fff" stroke="#26334f" stroke-width="1.3"/><path d="M8.5 2.5 H11 V5" stroke="#e00" stroke-width="1.2" fill="none"/></svg>
<svg class="a" style="left:1327.5px;top:163.7px;" width="16" height="16" viewBox="0 0 16 16"><path d="M1.5 15.5 V8.5 H5.5 V5 Q5.5 1 9 1 Q12.5 1 12.5 5 V9.5 M3.5 15.5 V10.5 H7.5 V5.5 Q7.5 3 9 3 Q10.5 3 10.5 5.5 V9.5 M1.5 15 H8" stroke="#26334f" stroke-width="1.3" fill="none"/></svg>
<svg class="a" style="left:1327.5px;top:185.75px;" width="16" height="16" viewBox="0 0 16 16"><rect x="1.5" y="0.5" width="14" height="14" fill="none" stroke="#888" stroke-dasharray="2.5 1.5"/><rect x="3.5" y="3.5" width="10" height="10" fill="none" stroke="#999" stroke-dasharray="2 1.5"/><rect x="0.5" y="8.5" width="7" height="7" fill="#fff" stroke="#26334f" stroke-width="1.3"/></svg>
<svg class="a" style="left:1327.5px;top:209.0px;" width="16" height="16" viewBox="0 0 16 16"><path d="M2.5 2.5 L13.5 13.5 M13.5 2.5 L2.5 13.5" stroke="#e02a10" stroke-width="3.2"/></svg>
<svg class="a" style="left:1327.5px;top:238.3px;" width="16" height="16" viewBox="0 0 16 16"><path d="M4 3.2 A6 6 0 1 0 12.5 3.2" stroke="#1d56a8" stroke-width="2.1" fill="none"/><path d="M10.5 0.5 L15.5 1.5 L13.5 6 Z" fill="#1d56a8"/><path d="M8 5.5 V10.5 M5.5 8 H10.5" stroke="#e00" stroke-width="1.3"/></svg>
<svg class="a" style="left:1327.5px;top:261.0px;" width="16" height="16" viewBox="0 0 16 16"><path d="M2 7 Q1.5 13 8 13 Q14.5 13 14 7" stroke="#1d56a8" stroke-width="2.3" fill="none"/><path d="M0.5 8.5 L2 5 L4.5 8 Z" fill="#1d56a8"/><path d="M8 0 V16" stroke="#e00" stroke-width="1.1" stroke-dasharray="2.2 1.3"/></svg>
<svg class="a" style="left:1327.5px;top:290.5px;" width="16" height="16" viewBox="0 0 16 16"><path d="M6.5 1.5 L1 15 H6.5 Z" fill="#fff" stroke="#26334f" stroke-width="1.3" stroke-linejoin="round"/><path d="M9.5 1.5 L15 15 H9.5 Z" fill="#fff" stroke="#26334f" stroke-width="1.3" stroke-linejoin="round"/><path d="M8 0 V16" stroke="#e00" stroke-width="1" stroke-dasharray="2.2 1.2"/></svg>
<svg class="a" style="left:1327.5px;top:312.6px;" width="16" height="16" viewBox="0 0 16 16"><path d="M7 2 L1 13 L6 15 Z" fill="#8fd39a" stroke="#1f7a33" stroke-width="1.2"/><path d="M9 2 L15 13 L10 15 Z" fill="#8fd39a" stroke="#1f7a33" stroke-width="1.2"/><path d="M3 4 L13 12" stroke="#e00" stroke-width="1.2"/></svg>
<svg class="a" style="left:1327.5px;top:343.0px;" width="16" height="16" viewBox="0 0 16 16"><rect x="2.5" y="2.5" width="11" height="11" fill="none" stroke="#2a5cc0" stroke-width="1.3" stroke-dasharray="3 2"/><rect x="1.0" y="1.0" width="3" height="3" fill="#fff" stroke="#2a5cc0" stroke-width="0.9"/><rect x="12.0" y="1.0" width="3" height="3" fill="#fff" stroke="#2a5cc0" stroke-width="0.9"/><rect x="1.0" y="12.0" width="3" height="3" fill="#fff" stroke="#2a5cc0" stroke-width="0.9"/><rect x="12.0" y="12.0" width="3" height="3" fill="#fff" stroke="#2a5cc0" stroke-width="0.9"/></svg>
<svg class="a" style="left:1327.5px;top:364.0px;" width="16" height="16" viewBox="0 0 16 16"><rect x="2" y="2" width="12" height="12" fill="none" stroke="#5a8fd8" stroke-dasharray="1.5 1.5"/><rect x="0.6000000000000001" y="0.6000000000000001" width="2.8" height="2.8" fill="#fff" stroke="#2a5cc0" stroke-width="0.9"/><rect x="6.6" y="0.6000000000000001" width="2.8" height="2.8" fill="#fff" stroke="#2a5cc0" stroke-width="0.9"/><rect x="12.6" y="0.6000000000000001" width="2.8" height="2.8" fill="#fff" stroke="#2a5cc0" stroke-width="0.9"/><rect x="0.6000000000000001" y="6.6" width="2.8" height="2.8" fill="#fff" stroke="#2a5cc0" stroke-width="0.9"/><rect x="12.6" y="6.6" width="2.8" height="2.8" fill="#fff" stroke="#2a5cc0" stroke-width="0.9"/><rect x="0.6000000000000001" y="12.6" width="2.8" height="2.8" fill="#fff" stroke="#2a5cc0" stroke-width="0.9"/><rect x="6.6" y="12.6" width="2.8" height="2.8" fill="#fff" stroke="#2a5cc0" stroke-width="0.9"/><rect x="12.6" y="12.6" width="2.8" height="2.8" fill="#fff" stroke="#2a5cc0" stroke-width="0.9"/><rect x="6.6" y="6.6" width="2.8" height="2.8" fill="#fff" stroke="#2a5cc0" stroke-width="0.9"/></svg>
<svg class="a" style="left:1327.5px;top:392.4px;" width="16" height="16" viewBox="0 0 16 16"><rect x="1.5" y="5.5" width="12" height="9" fill="#fff" stroke="#1f7a33" stroke-width="1.8"/><path d="M7 4 L11 1 M9 1 H11.5 V3.5" stroke="#26334f" stroke-width="1.2" fill="none"/></svg>
<svg class="a" style="left:1327.5px;top:415.0px;" width="16" height="16" viewBox="0 0 16 16"><rect x="1.5" y="3.5" width="13" height="9" fill="#fff" stroke="#1f7a33" stroke-width="1.8"/></svg>
<svg class="a" style="left:1327.5px;top:437.0px;" width="16" height="16" viewBox="0 0 16 16"><rect x="1.5" y="3.5" width="13" height="9" fill="#fff" stroke="#1f7a33" stroke-width="1.8"/><path d="M9 0 V16" stroke="#26334f" stroke-width="1.4"/><rect x="10" y="4.5" width="4" height="7" fill="#aaa"/></svg>
<svg class="a" style="left:1327.5px;top:467.8px;" width="16" height="16" viewBox="0 0 16 16"><path d="M1.5 5.5 H11.5 V15.5 H1.5 Z M1.5 5.5 L5.5 1.5 H15.5 L11.5 5.5 M15.5 1.5 V11.5 L11.5 15.5" stroke="#555" stroke-width="1.1" fill="none"/><path d="M5.5 1.5 V11.5 H15.5 M5.5 11.5 L1.5 15.5" stroke="#999" stroke-width="0.8" fill="none"/></svg>
<svg class="a" style="left:1327.5px;top:499.0px;" width="16" height="16" viewBox="0 0 16 16"><rect x="1.5" y="8.5" width="4" height="7" fill="#fff" stroke="#26334f" stroke-width="1.3"/><rect x="10.5" y="0.5" width="5" height="15" fill="#fff" stroke="#26334f" stroke-width="1.3"/><path d="M6 7 L10 3" stroke="#888" stroke-dasharray="1 1"/></svg>
<svg class="a" style="left:1327.5px;top:528.5px;" width="16" height="16" viewBox="0 0 16 16"><path d="M2 14 L8 8" stroke="#26334f" stroke-width="2.4" stroke-linecap="round"/><path d="M8.5 7.5 L11 5" stroke="#8a94a6" stroke-width="1.6" stroke-dasharray="1.2 1"/><path d="M9 1.5 L15 7.5" stroke="#26334f" stroke-width="2.4" stroke-linecap="round"/><path d="M13 16 L16 13 L16 16 Z" fill="#111"/></svg>
<svg class="a" style="left:1327.5px;top:558.6px;" width="16" height="16" viewBox="0 0 16 16"><path d="M1.5 1 V6 M7.5 1 V6 M13.5 1 V6" stroke="#26334f" stroke-width="1.3"/><path d="M3 3.5 H6 M9 3.5 H12" stroke="#26334f" stroke-width="1"/><path d="M1 8.5 H15" stroke="#26334f" stroke-width="1.4"/><rect x="0.5" y="10.5" width="15" height="4" fill="#f2b233"/><path d="M12 14.5 L15.5 11 V14.5 Z" fill="#111"/></svg>
<svg class="a" style="left:1327.5px;top:587.0px;" width="16" height="16" viewBox="0 0 16 16"><path d="M1.5 10 V1.5 H14" stroke="#888" stroke-dasharray="1 1" fill="none"/><path d="M1.5 15.5 V13 Q1.5 2 14.5 2 V15.5 Z" fill="#eef4fa" stroke="#26334f" stroke-width="1.6"/><path d="M12 15.5 L15.5 12 V15.5 Z" fill="#111"/></svg>
<svg class="a" style="left:1327.5px;top:617.4px;" width="16" height="16" viewBox="0 0 16 16"><path d="M5 4 Q0 8 4 13 H13" stroke="#2b3a55" stroke-width="1.4" fill="none"/><path d="M6.5 11 L14.5 3" stroke="#f0b040" stroke-width="3.2"/><rect x="3.7" y="2.7" width="2.6" height="2.6" fill="#fff" stroke="#2a5cc0" stroke-width="0.9"/><rect x="2.7" y="11.7" width="2.6" height="2.6" fill="#fff" stroke="#2a5cc0" stroke-width="0.9"/><rect x="11.7" y="11.7" width="2.6" height="2.6" fill="#fff" stroke="#2a5cc0" stroke-width="0.9"/></svg>
<div class="hsep" style="left:1327px;top:230px;width:17px"></div>
<div class="hsep" style="left:1327px;top:282px;width:17px"></div>
<div class="hsep" style="left:1327px;top:334px;width:17px"></div>
<div class="hsep" style="left:1327px;top:386px;width:17px"></div>
<div class="hsep" style="left:1327px;top:459px;width:17px"></div>
<div class="hsep" style="left:1327px;top:490px;width:17px"></div>
<div class="hsep" style="left:1327px;top:520px;width:17px"></div>
<div class="hsep" style="left:1327px;top:550px;width:17px"></div>
<div class="hsep" style="left:1327px;top:580px;width:17px"></div>
<div class="hsep" style="left:1327px;top:610px;width:17px"></div>
<div class="a" style="left:59px;top:620px;width:1259px;height:20px;background:#fff"></div>
<div class="a" style="left:60px;top:620px;width:1258px;height:16px;background:#efefef"></div>
<div class="a" style="left:60px;top:620px;width:16px;height:16px;background:#efefef;border-right:2px solid #a9a9a9;border-bottom:2px solid #a9a9a9"></div>
<div class="a" style="left:76px;top:620px;width:16px;height:16px;background:#efefef;border-right:2px solid #a9a9a9;border-bottom:2px solid #a9a9a9"></div>
<div class="a" style="left:92px;top:620px;width:16px;height:16px;background:#efefef;border-right:2px solid #a9a9a9;border-bottom:2px solid #a9a9a9"></div>
<div class="a" style="left:108px;top:620px;width:16px;height:16px;background:#efefef;border-right:2px solid #a9a9a9;border-bottom:2px solid #a9a9a9"></div>
<svg class="a" style="left:62.0px;top:622.0px;" width="12" height="12" viewBox="0 0 12 12"><path d="M1.5 1 V11" stroke="#000" stroke-width="1.4"/><path d="M10 1 L3 6 L10 11 Z" fill="#000"/></svg>
<svg class="a" style="left:78.0px;top:622.0px;" width="12" height="12" viewBox="0 0 12 12"><path d="M8 1 L2 6 L8 11 Z" fill="#000"/></svg>
<svg class="a" style="left:94.0px;top:622.0px;" width="12" height="12" viewBox="0 0 12 12"><path d="M4 1 L10 6 L4 11 Z" fill="#000"/></svg>
<svg class="a" style="left:110.0px;top:622.0px;" width="12" height="12" viewBox="0 0 12 12"><path d="M10.5 1 V11" stroke="#000" stroke-width="1.4"/><path d="M2 1 L9 6 L2 11 Z" fill="#000"/></svg>
<svg class="a" style="left:120px;top:619px" width="250" height="20" viewBox="120 619 250 20"><path d="M124.3 620 L132 635.5 H171.3 L178.5 620 Z" fill="#fafafa"/><g fill="none" stroke="#111" stroke-width="1.1"><path d="M124.3 620 L132 635.5 H171.3 L178.5 620"/><path d="M175.5 627.5 L179.5 635.5 H229.8 L233 620.5 L239 635.5 H288.6 L292 620.5 L298 635.5 H347.6 L355 620"/></g><path d="M179.5 636 H348" stroke="#999" stroke-width="1"/></svg>
<div class="a t" style="left:135px;top:623px;font-size:11.3px;font-weight:bold;color:#000">Model</div>
<div class="a t" style="left:186px;top:623px;font-size:11.3px;color:#1a1a44;letter-spacing:-0.55px">Layout1</div>
<div class="a t" style="left:245px;top:623px;font-size:11.3px;color:#1a1a44;letter-spacing:-0.55px">Layout2</div>
<div class="a t" style="left:304px;top:623px;font-size:11.3px;color:#1a1a44;letter-spacing:-0.55px">Layout3</div>
<div class="a" style="left:0px;top:639px;width:1351px;height:6px;background:#c8ccd4"></div>
<div class="a" style="left:0px;top:645px;width:1351px;height:90px;background:#c9cdd5"></div>
<div class="a" style="left:1px;top:645px;width:18px;height:88px;background:#c4c8d0"></div>
<div class="a" style="left:20px;top:645px;width:1329px;height:88px;background:#fff"></div>
<div class="a" style="left:20px;top:645px;width:1329px;height:1px;background:#6a6a6a"></div>
<div class="a" style="left:20px;top:645px;width:1px;height:88px;background:#6a6a6a"></div>
<div class="a" style="left:20px;top:712px;width:1329px;height:1px;background:#6a6a6a"></div>
<div class="a" style="left:1332px;top:646px;width:16px;height:66px;background:#f0f0f0"></div>
<div class="a" style="left:1333px;top:678px;width:14px;height:17px;background:#cdcdcd"></div>
<svg class="a" style="left:1335.0px;top:651.0px;" width="10" height="8" viewBox="0 0 10 8"><path d="M1 6 L5 2 L9 6" fill="none" stroke="#606060" stroke-width="1.6"/></svg>
<svg class="a" style="left:1335.0px;top:699.0px;" width="10" height="8" viewBox="0 0 10 8"><path d="M1 2 L5 6 L9 2" fill="none" stroke="#606060" stroke-width="1.6"/></svg>
<div class="a t" style="left:22px;top:647px;font-family:'Liberation Mono',monospace;font-size:13.33px;color:#000;line-height:14px">Cancel</div>
<div class="a t" style="left:22px;top:661px;font-family:'Liberation Mono',monospace;font-size:13.33px;color:#000;line-height:14px">Command:</div>
<div class="a t" style="left:22px;top:675px;font-family:'Liberation Mono',monospace;font-size:13.33px;color:#000;line-height:14px">Opposite corner:</div>
<div class="a t" style="left:22px;top:689px;font-family:'Liberation Mono',monospace;font-size:13.33px;color:#000;line-height:14px">Cancel</div>
<div class="a t" style="left:25px;top:716.5px;font-family:'Liberation Mono',monospace;font-size:11.5px;color:#000;-webkit-text-stroke:0.3px #000">Command:</div>
<svg class="a" style="left:5.5px;top:650.0px;" width="9" height="9" viewBox="0 0 9 9"><path d="M1 1 L8 8 M8 1 L1 8" stroke="#111" stroke-width="1.6"/></svg>
<div class="a" style="left:5px;top:672px;border-left:5px solid transparent;border-right:5px solid transparent;border-top:5px solid #111"></div>
<div class="a" style="left:0px;top:733px;width:1351px;height:1px;background:#f4f5f7"></div>
<div class="a" style="left:0px;top:734px;width:1351px;height:1px;background:#a9adb5"></div>
<div class="a" style="left:0px;top:735px;width:1351px;height:21px;background:linear-gradient(#e9ebef 0%,#cdd1d8 30%,#a9aeb6 60%,#c4c8cf 100%)"></div>
<div class="a" style="left:0px;top:756px;width:1351px;height:1px;background:#1b9a8a"></div>
<div class="a" style="left:1350px;top:0px;width:1px;height:757px;background:#1b9a8a"></div>
<div class="a t" style="left:4.5px;top:740px;font-size:12px;color:#222;letter-spacing:-0.85px">Ready</div>
<div class="sep" style="left:708px;top:737px;height:18px;border-left-color:#8a8e96"></div>
<div class="sep" style="left:719px;top:737px;height:18px;border-left-color:#8a8e96"></div>
<div class="sep" style="left:880px;top:737px;height:18px;border-left-color:#8a8e96"></div>
<div class="sep" style="left:929px;top:737px;height:18px;border-left-color:#8a8e96"></div>
<div class="a t" style="left:724px;top:740px;font-size:12px;color:#111;letter-spacing:-0.62px">263849.9968,4674375.0553,0</div>
<div class="a t" style="left:886px;top:740px;font-size:12px;color:#111;letter-spacing:-0.7px">OpenGL</div>
<div class="sep" style="left:971px;top:737px;height:18px;border-left-color:#8a8e96"></div>
<div class="sep" style="left:993px;top:737px;height:18px;border-left-color:#8a8e96"></div>
<div class="sep" style="left:1016px;top:737px;height:18px;border-left-color:#8a8e96"></div>
<div class="sep" style="left:1037px;top:737px;height:18px;border-left-color:#8a8e96"></div>
<div class="sep" style="left:1059px;top:737px;height:18px;border-left-color:#8a8e96"></div>
<div class="sep" style="left:1081px;top:737px;height:18px;border-left-color:#8a8e96"></div>
<div class="sep" style="left:1102px;top:737px;height:18px;border-left-color:#8a8e96"></div>
<div class="sep" style="left:1125px;top:737px;height:18px;border-left-color:#8a8e96"></div>
<div class="sep" style="left:1148px;top:737px;height:18px;border-left-color:#8a8e96"></div>
<div class="sep" style="left:1169px;top:737px;height:18px;border-left-color:#8a8e96"></div>
<div class="sep" style="left:1212px;top:737px;height:18px;border-left-color:#8a8e96"></div>
<div class="sep" style="left:1254px;top:737px;height:18px;border-left-color:#8a8e96"></div>
<div class="sep" style="left:1277px;top:737px;height:18px;border-left-color:#8a8e96"></div>
<div class="sep" style="left:1299px;top:737px;height:18px;border-left-color:#8a8e96"></div>
<div class="sep" style="left:1321px;top:737px;height:18px;border-left-color:#8a8e96"></div>
<svg class="a" style="left:933.6px;top:737.5px;" width="16" height="16" viewBox="0 0 16 16"><path d="M8 1 C6 5 6 7 7 9 C4 9 2 11 1 14 C4 14 6 13 8 11 C10 13 12 14 15 14 C14 11 12 9 9 9 C10 7 10 5 8 1 Z" fill="#fff" stroke="#222" stroke-width="1.3"/></svg>
<svg class="a" style="left:975.0px;top:737.5px;" width="16" height="16" viewBox="0 0 16 16"><rect x="-0.5" y="0" width="17" height="16" fill="#e9e27a"/><path d="M6 1 C4 5 4 7 5 9 C2 9 1 11 0.5 14 C3 14 5 13 6 11 C7 12 8 13 9 13" fill="#fff" stroke="#222" stroke-width="1.2"/><circle cx="11" cy="9" r="4" fill="#f6ef7a" stroke="#999" stroke-width="0.8"/><rect x="9.5" y="12.5" width="3" height="3" fill="#888"/></svg>
<svg class="a" style="left:996.6px;top:737.5px;" width="16" height="16" viewBox="0 0 16 16"><path d="M6 1 C4 5 4 7 5 9 C2 9 1 11 0.5 14 C3 14 5 13 6 11 C8 13 10 14 12 14 C11 11 9 9 7 9 C8 7 8 5 6 1 Z" fill="#fff" stroke="#222" stroke-width="1.2"/><path d="M11 2 L15 5 L12 7 L15 9" stroke="#c9a040" stroke-width="1.6" fill="none"/></svg>
<svg class="a" style="left:1017.4000000000001px;top:737.5px;" width="16" height="16" viewBox="0 0 16 16"><rect x="1" y="1" width="14" height="14" fill="#ddd" stroke="#444"/><path d="M4.5 1 V15 M8 1 V15 M11.5 1 V15 M1 4.5 H15 M1 8 H15 M1 11.5 H15" stroke="#777" stroke-width="0.7"/><path d="M8 1 V15" stroke="#1a1"/><path d="M1 8 H15" stroke="#e00"/><rect x="5.5" y="5.5" width="5" height="5" fill="none" stroke="#e00" stroke-width="1.2"/></svg>
<svg class="a" style="left:1041.0px;top:737.5px;" width="16" height="16" viewBox="0 0 16 16"><rect x="1" y="1" width="14" height="14" fill="#ddd" stroke="#444"/><path d="M4.5 1 V15 M8 1 V15 M11.5 1 V15 M1 4.5 H15 M1 8 H15 M1 11.5 H15" stroke="#777" stroke-width="0.7"/></svg>
<svg class="a" style="left:1063.0px;top:737.5px;" width="16" height="16" viewBox="0 0 16 16"><path d="M2 0 V14 H15" stroke="#e00" stroke-width="1.2" fill="none"/><path d="M2 0 V14" stroke="#1a1" stroke-width="1.2"/><path d="M6 14 V9 H2" stroke="#888" fill="none"/></svg>
<svg class="a" style="left:1084.6px;top:737.5px;" width="16" height="16" viewBox="0 0 16 16"><circle cx="8" cy="9" r="6.5" fill="none" stroke="#333" stroke-width="1.4"/><path d="M8 9 L15 3 M8 9 H15" stroke="#e00" stroke-width="1.2"/></svg>
<svg class="a" style="left:1107.4px;top:737.5px;" width="16" height="16" viewBox="0 0 16 16"><rect x="0" y="0" width="16" height="16" fill="#e9e27a"/><path d="M8 0 V16 M0 7.5 H16" stroke="#222" stroke-width="1.5"/><circle cx="8" cy="7.5" r="1.7" fill="#fff" stroke="#e00" stroke-width="1.3"/></svg>
<svg class="a" style="left:1128.7px;top:737.5px;" width="16" height="16" viewBox="0 0 16 16"><rect x="0" y="0" width="16" height="16" fill="#e9e27a"/><path d="M15 1 L1 14 H15" stroke="#26334f" stroke-width="1.6" fill="none"/><path d="M9 5 L11 10" stroke="#333"/></svg>
<svg class="a" style="left:1150.8px;top:737.5px;" width="16" height="16" viewBox="0 0 16 16"><path d="M8 0 V16 M0 8 H16" stroke="#222" stroke-width="1.6"/></svg>
<svg class="a" style="left:1258.4px;top:737.5px;" width="16" height="16" viewBox="0 0 16 16"><circle cx="8" cy="8" r="4.5" fill="none" stroke="#2f6ad0" stroke-width="3"/><g stroke="#2f6ad0" stroke-width="2.6"><path d="M8 0 V3 M8 13 V16 M0 8 H3 M13 8 H16 M2.3 2.3 L4.5 4.5 M11.5 11.5 L13.7 13.7 M13.7 2.3 L11.5 4.5 M4.5 11.5 L2.3 13.7"/></g></svg>
<svg class="a" style="left:1280.7px;top:737.5px;" width="16" height="16" viewBox="0 0 16 16"><rect x="0.5" y="1.5" width="9" height="7" fill="#fff" stroke="#222" stroke-width="1.1"/><rect x="0.5" y="1.5" width="9" height="1.8" fill="#1d5fc6"/><rect x="5.5" y="7.5" width="10" height="7" fill="#fff" stroke="#222" stroke-width="1.1"/><rect x="5.5" y="7.5" width="10" height="1.8" fill="#1d5fc6"/></svg>
<svg class="a" style="left:1302.5px;top:737.5px;" width="16" height="16" viewBox="0 0 16 16"><circle cx="8" cy="8" r="7" fill="#fff" stroke="#222" stroke-width="1.5"/><path d="M5 12 L12.5 4.5" stroke="#2f7ad8" stroke-width="1.5"/></svg>
<svg class="a" style="left:1325.3px;top:737.5px;" width="16" height="16" viewBox="0 0 16 16"><rect x="1" y="3" width="14" height="10" fill="#f7d56e" stroke="#c9a040"/><path d="M1 3 L8 9 L15 3" stroke="#fff8d8" stroke-width="1.2" fill="none"/></svg>
<div class="a t" style="left:955px;top:740px;font-size:12px;color:#222;letter-spacing:-0.6px">1:1</div>
<div class="a t" style="left:1173px;top:740px;font-size:12px;color:#1f2a44;letter-spacing:-1.1px">MODEL</div>
<div class="a t" style="left:1216.5px;top:740.5px;font-size:11.2px;color:#959ba3;letter-spacing:-1.05px">TABLET</div>
</body></html>
